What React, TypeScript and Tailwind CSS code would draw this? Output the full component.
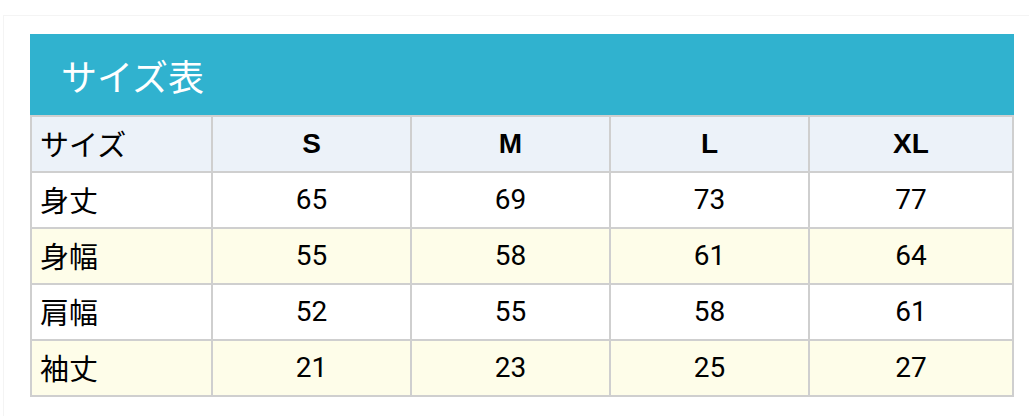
const sizes = ['S', 'M', 'L', 'XL'];

const rows = [
  { label: '身丈', values: [65, 69, 73, 77], tint: false },
  { label: '身幅', values: [55, 58, 61, 64], tint: true },
  { label: '肩幅', values: [52, 55, 58, 61], tint: false },
  { label: '袖丈', values: [21, 23, 25, 27], tint: true },
];

const jp = "font-['Noto_Sans_CJK_JP',sans-serif]";

export default function App() {
  return (
    <div className="h-[416px] w-[1029px] bg-white">
      <div className="ml-[3px] mt-[15px] h-[401px] border-l border-t border-[#f4f4f4] pl-[26px] pt-[18px]">
        <div className="w-[984px]">
          <div className={`flex h-[81px] items-center bg-[#30b2cf] pl-[31px] text-[36px] text-white ${jp}`}>
            サイズ表
          </div>
          <table className="w-full table-fixed border-collapse border-2 border-[#cfcfcf] text-black">
            <colgroup>
              <col className="w-[181px]" />
              <col className="w-[199px]" />
              <col className="w-[199px]" />
              <col className="w-[199px]" />
              <col />
            </colgroup>
            <thead>
              <tr className="h-[56px] bg-[#ecf2f9]">
                <th className={`border-2 border-[#cfcfcf] pl-[8px] text-left text-[29px] font-normal ${jp}`}>
                  サイズ
                </th>
                {sizes.map((s) => (
                  <th
                    key={s}
                    className="border-2 border-[#cfcfcf] text-center font-['Liberation_Sans',sans-serif] text-[28px] font-bold"
                  >
                    {s}
                  </th>
                ))}
              </tr>
            </thead>
            <tbody>
              {rows.map((r) => (
                <tr key={r.label} className={r.tint ? 'h-[56px] bg-[#fefde9]' : 'h-[56px] bg-white'}>
                  <td className={`border-2 border-[#cfcfcf] pl-[8px] text-[29px] ${jp}`}>{r.label}</td>
                  {r.values.map((v, i) => (
                    <td
                      key={i}
                      className="border-2 border-[#cfcfcf] text-center font-['Roboto',sans-serif] text-[28px]"
                    >
                      {v}
                    </td>
                  ))}
                </tr>
              ))}
            </tbody>
          </table>
        </div>
      </div>
    </div>
  );
}
